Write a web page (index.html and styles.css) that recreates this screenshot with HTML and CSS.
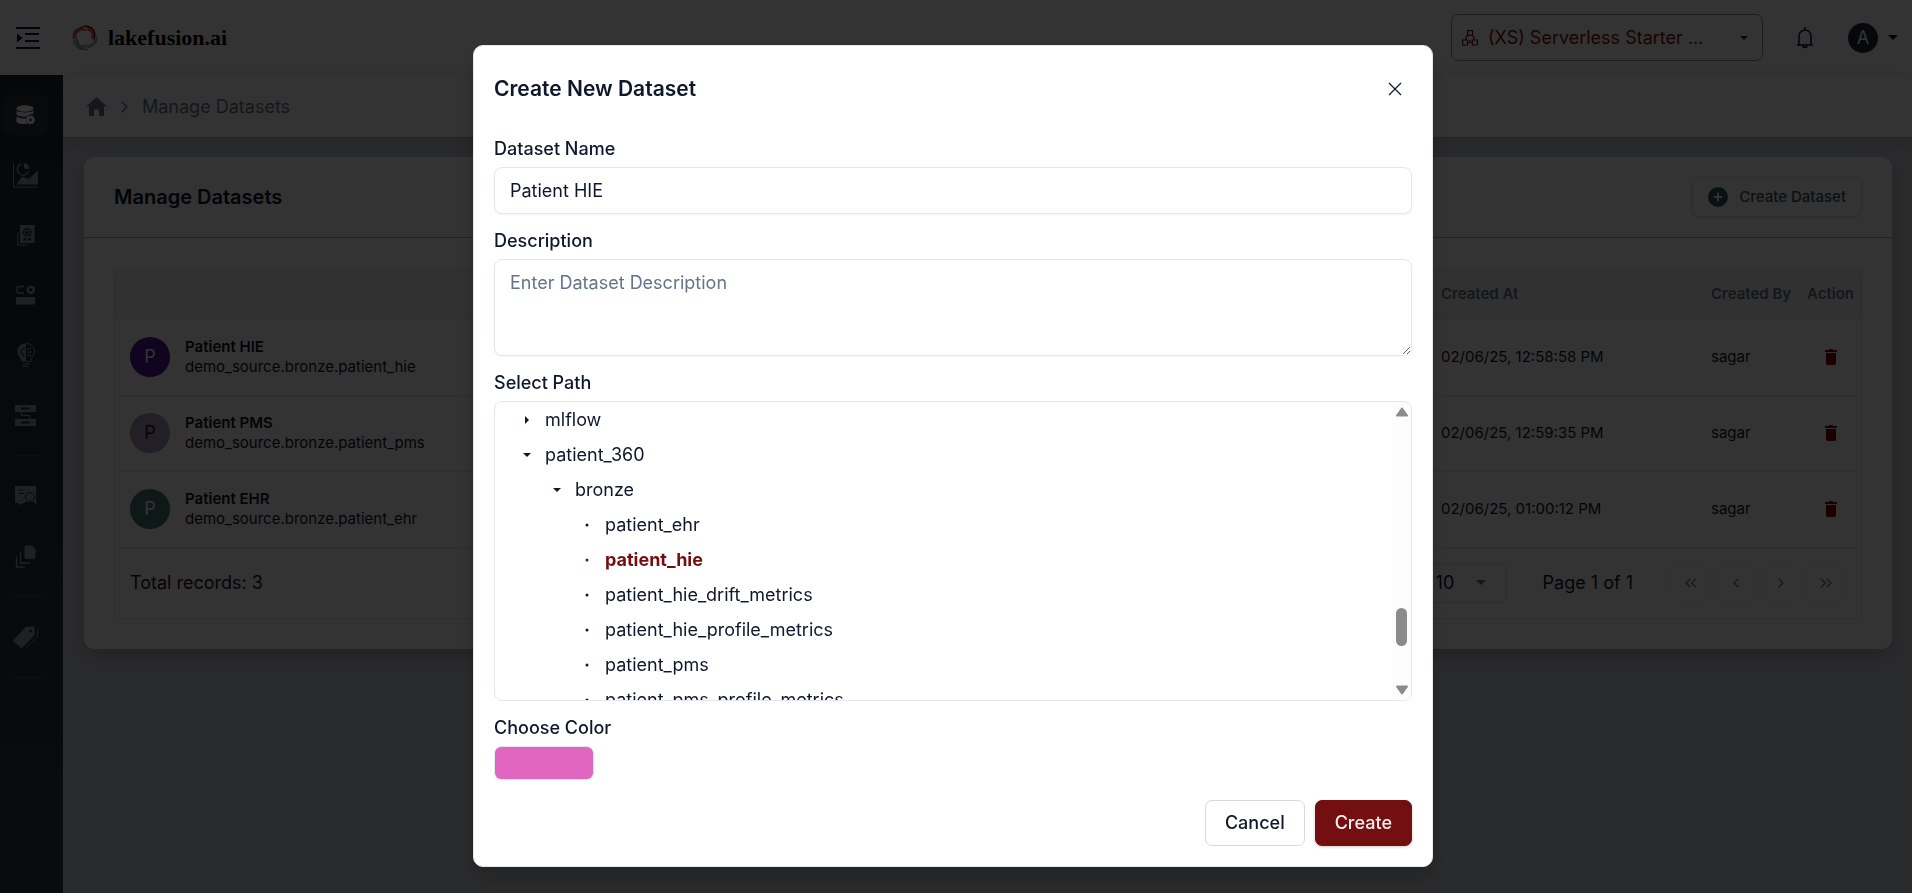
FILE: index.html
```html
<!DOCTYPE html>
<html lang="en">
<head>
<meta charset="utf-8">
<title>lakefusion.ai - Manage Datasets</title>
<link rel="stylesheet" href="styles.css">
</head>
<body>
<div class="app">
  <header class="topbar">
    <button class="icon-button menu-button" type="button" aria-label="Toggle menu">
      <svg width="24" height="22" viewBox="0 0 24 22" fill="currentColor"><path d="M0 0h24v2H0zM9 6h14v2H9zM9 13h14v2H9zM0 20h24v2H0zM1 6.500v9L6.500 11z"/></svg>
    </button>
    <a class="brand" href="#">
      <svg width="26" height="26" viewBox="0 0 26 26" fill="none" stroke-linecap="round">
        <path d="M1.500 13C1 8 4 3.500 10 3" stroke="#c44a4a" stroke-width="2"/>
        <path d="M3 12C4 6 9 3.500 14 5" stroke="#d06060" stroke-width="2"/>
        <path d="M9 2.500C15 0 21 3 22.500 8" stroke="#a02828" stroke-width="1.500"/>
        <path d="M14 1.200C20 2 24 6 22 14" stroke="#8a1d1d" stroke-width="2"/>
        <path d="M16 4.500C20 6.500 21.500 10 20 13" stroke="#b53a3a" stroke-width="1.500"/>
        <path d="M25 12C25 17 22 21 16 22.500" stroke="#8a94a6" stroke-width="1.500"/>
        <path d="M23 15C21 20 16 22 11 20.500" stroke="#949eae" stroke-width="1.500"/>
        <path d="M4 13C3.500 19 8 25 15 24.500" stroke="#7c879b" stroke-width="1.500"/>
        <path d="M1.500 15C2 20 6 24 10 24.500" stroke="#949eae" stroke-width="1.500"/>
        <path d="M5.500 15C6 19 9 22 13 22.500" stroke="#8a94a6" stroke-width="1.500"/>
      </svg>
      <span class="brand-name">lakefusion.ai</span>
    </a>
    <div class="topbar-tools">
      <label class="cluster">
        <svg width="16" height="16" viewBox="0 0 16 16" fill="none" stroke="currentColor" stroke-width="1.200"><path d="M5.600.6h5v4.800h-5zM.6 10h5v5h-5zM10.400 10h5v5h-5zM5.600 5.400 4 7.500V10M10.600 5.400 12 7.500V10M5.600 12.500h4.800M8 10v2.500"/></svg>
        <select class="cluster-select" aria-label="Compute cluster"><option>(XS) Serverless Starter ...</option></select>
        <svg width="8" height="4" viewBox="0 0 8 4" fill="currentColor"><path d="M0 0h8L4 4z"/></svg>
      </label>
      <button class="icon-button" type="button" aria-label="Notifications">
        <svg width="18" height="22" viewBox="0 0 18 22" fill="none" stroke="currentColor" stroke-width="1.600"><path d="M9 0v2.500M1 18h16M3 18V9a6 6 0 0 1 12 0v9M6.800 18.300a2.200 2.200 0 0 0 4.400 0"/></svg>
      </button>
      <button class="account" type="button" aria-label="Account menu">
        <span class="account-initial">A</span>
        <svg width="10" height="5" viewBox="0 0 10 5" fill="currentColor"><path d="M0 0h10L5 5z"/></svg>
      </button>
    </div>
  </header>

  <div class="body">
    <nav class="sidebar" aria-label="Main">
      <a class="nav-item nav-item-active" href="#" aria-label="Datasets">
        <svg width="20" height="20" viewBox="0 0 20 20" fill="currentColor"><ellipse cx="9" cy="3.500" rx="8.500" ry="3.300"/><path d="M.5 5.500c2 2.500 15 2.500 17 0v3.800a6 6 0 0 0-6.500 2.200C6 12 1.500 11 .5 9.500zM.5 11.500c2 1.800 6 2.200 9.500 2-.3 2 .2 3.800 1.500 5.200C7 19.600 1 19 .5 16.500z"/><path fill-rule="evenodd" d="M14.500 10.500a4.400 4.400 0 1 0 0 8.800 4.400 4.400 0 0 0 0-8.800zm0 3a1.400 1.400 0 1 1 0 2.800 1.400 1.400 0 0 1 0-2.800z"/></svg>
      </a>
      <a class="nav-item" href="#" aria-label="Analytics">
        <svg width="26" height="26" viewBox="0 0 26 26" fill="currentColor"><path d="M.5 1v24H25" fill="none" stroke="currentColor"/><path d="M4 22.500v-1l5-7 7 2.500 9-9v14.500zM11 .8a6 6 0 0 1 5.500 6H11z"/><path d="M8.500 1.800a5.700 5.700 0 1 0 7 7" fill="none" stroke="currentColor" stroke-width="1.300"/></svg>
      </a>
      <a class="nav-item" href="#" aria-label="Quality">
        <svg width="18" height="21" viewBox="0 0 18 21" fill="currentColor"><path fill-rule="evenodd" d="M3 0h14.500v18H3zM10.200 3a4.300 4.300 0 1 0 .01 0zM6.500 13v3l2-.8 1 .8v-3zm4.500 0v3l1-.8 2 .8v-3z"/><circle cx="10.200" cy="7.300" r="3.100"/><path class="nav-ink" d="m10.200 4.800.8 1.700 1.900.2-1.400 1.300.4 1.900-1.700-1-1.700 1 .4-1.900L7.500 6.700l1.900-.2z"/><path d="M.8 7v13H10" fill="none" stroke="currentColor"/></svg>
      </a>
      <a class="nav-item" href="#" aria-label="Entities">
        <svg width="20" height="20" viewBox="0 0 20 20" fill="currentColor"><rect y="12" width="19" height="7.500" rx="1"/><path d="M8 1.500H2.500Q1 1.500 1 3v3.500Q1 8 2.500 8H8" fill="none" stroke="currentColor" stroke-width="1.500"/><circle cx="14.800" cy="4.800" r="3" fill="none" stroke="currentColor" stroke-width="2.400"/></svg>
      </a>
      <a class="nav-item" href="#" aria-label="Insights">
        <svg width="18" height="25" viewBox="0 0 18 25" fill="currentColor"><path d="M9 .5C4 .5.5 4 .5 8.500c0 5 3.500 5 4 10H9z"/><path d="M9 .5c5 0 8.500 3.500 8.500 8 0 5-3.500 5-4 10H9M5 21h8.500M6 23.500h6M10 6h3l1-1.500M10 9h5M10 12h3l1 2" fill="none" stroke="currentColor"/><path class="nav-line" d="M8 5H5.500v2.500H4v3h2v2.500h2" fill="none"/></svg>
      </a>
      <a class="nav-item" href="#" aria-label="Pipelines">
        <svg width="21" height="21" viewBox="0 0 21 21" fill="currentColor"><path fill-rule="evenodd" d="M0 0h21v7H0zM6 2.500v2h9v-2zM0 14h21v7H0zm6 2.500v2h9v-2z"/><path d="M6.500 7v3.500h8V14" fill="none" stroke="currentColor"/></svg>
      </a>
      <hr class="nav-rule">
      <a class="nav-item" href="#" aria-label="Review">
        <svg width="22" height="20" viewBox="0 0 22 20" fill="currentColor"><path d="M0 0h21v16H10l-5 3-1.500-2H0z"/><path class="nav-line" d="M4 4h4M3.500 7.500H9M20.500 17l-3-3" fill="none"/><circle class="nav-line" cx="15" cy="11" r="4.500" fill="none"/><path d="m18 14 3.500 3.500" stroke="currentColor" stroke-width="1.500"/></svg>
      </a>
      <a class="nav-item" href="#" aria-label="Documents">
        <svg width="21" height="23" viewBox="0 0 21 23" fill="currentColor"><path d="M10.500.5H17l3.500 4V12q0 2-2 2h-7q-2 0-2-2V2.500q0-2 1-2z"/><path d="M5.500 7v11H15M1.500 11v11H10" fill="none" stroke="currentColor" stroke-width="1.300"/></svg>
      </a>
      <hr class="nav-rule">
      <a class="nav-item" href="#" aria-label="Tags">
        <svg width="25" height="23" viewBox="0 0 25 23" fill="currentColor"><path fill-rule="evenodd" d="M13 .8h7.500q1 0 1 1V9L9.500 21.500q-1 1-2 0l-6.800-6q-1-1 0-2zM17.500 3.500a1.500 1.500 0 1 0 .01 0z"/><path d="M24.500 3v7.500L12.500 22.500" fill="none" stroke="currentColor" stroke-width=".8"/></svg>
      </a>
      <hr class="nav-rule">
    </nav>

    <div class="main">
      <nav class="breadcrumb" aria-label="Breadcrumb">
        <a class="crumb-home" href="#" aria-label="Home"><svg width="21" height="19" viewBox="0 0 21 19" fill="currentColor"><path d="M10.500 0 21 9.500h-3V19h-5v-6.500H8V19H3V9.500H0z"/></svg></a>
        <svg width="7" height="12" viewBox="0 0 7 12" fill="none" stroke="currentColor" stroke-width="1.500"><path d="m.8.8 5 5.200-5 5.200"/></svg>
        <span>Manage Datasets</span>
      </nav>

      <main class="content">
        <section class="card">
          <div class="card-head">
            <h1 class="card-title">Manage Datasets</h1>
            <button class="create-button" type="button">
              <svg width="20" height="20" viewBox="0 0 20 20"><circle cx="10" cy="10" r="10" fill="currentColor"/><path d="M10 5.800v8.400M5.800 10h8.400" stroke="#fff" stroke-width="2"/></svg>
              Create Dataset
            </button>
          </div>
          <div class="card-body">
            <div class="grid">
              <table class="table">
                <thead>
                  <tr><th class="col-name"></th><th class="col-date">Created At</th><th class="col-by">Created By</th><th class="col-action">Action</th></tr>
                </thead>
                <tbody>
                  <tr>
                    <td><div class="dataset"><span class="badge badge-hie">P</span><div><div class="dataset-name">Patient HIE</div><div>demo_source.bronze.patient_hie</div></div></div></td>
                    <td>02/06/25, 12:58:58 PM</td><td>sagar</td>
                    <td><button class="icon-button trash" type="button" aria-label="Delete Patient HIE"><svg width="12" height="16" viewBox="0 0 12 16" fill="currentColor"><path d="M0 1h3.500l1-1h3l1 1H12v2H0zM1 4h10v10q0 2-1.500 2h-7Q1 16 1 14z"/></svg></button></td>
                  </tr>
                  <tr>
                    <td><div class="dataset"><span class="badge badge-pms">P</span><div><div class="dataset-name">Patient PMS</div><div>demo_source.bronze.patient_pms</div></div></div></td>
                    <td>02/06/25, 12:59:35 PM</td><td>sagar</td>
                    <td><button class="icon-button trash" type="button" aria-label="Delete Patient PMS"><svg width="12" height="16" viewBox="0 0 12 16" fill="currentColor"><path d="M0 1h3.500l1-1h3l1 1H12v2H0zM1 4h10v10q0 2-1.500 2h-7Q1 16 1 14z"/></svg></button></td>
                  </tr>
                  <tr>
                    <td><div class="dataset"><span class="badge badge-ehr">P</span><div><div class="dataset-name">Patient EHR</div><div>demo_source.bronze.patient_ehr</div></div></div></td>
                    <td>02/06/25, 01:00:12 PM</td><td>sagar</td>
                    <td><button class="icon-button trash" type="button" aria-label="Delete Patient EHR"><svg width="12" height="16" viewBox="0 0 12 16" fill="currentColor"><path d="M0 1h3.500l1-1h3l1 1H12v2H0zM1 4h10v10q0 2-1.500 2h-7Q1 16 1 14z"/></svg></button></td>
                  </tr>
                </tbody>
              </table>
              <div class="pager">
                <span class="pager-total">Total records: 3</span>
                <label class="page-size">
                  <select class="page-size-select" aria-label="Rows per page"><option>10</option></select>
                  <svg width="10" height="5" viewBox="0 0 10 5" fill="currentColor"><path d="M0 0h10L5 5z"/></svg>
                </label>
                <span class="page-label">Page 1 of 1</span>
                <div class="page-buttons">
                  <button class="page-button" type="button" aria-label="First page" disabled><svg width="12" height="10" viewBox="0 0 12 10"><path d="M5.300.7 1 5l4.300 4.300M11 .7 6.700 5 11 9.300"/></svg></button>
                  <button class="page-button" type="button" aria-label="Previous page" disabled><svg width="6" height="10" viewBox="0 0 6 10"><path d="M5.300.7 1 5l4.300 4.300"/></svg></button>
                  <button class="page-button" type="button" aria-label="Next page" disabled><svg width="6" height="10" viewBox="0 0 6 10"><path d="M.7.7 5 5 .7 9.300"/></svg></button>
                  <button class="page-button" type="button" aria-label="Last page" disabled><svg width="12" height="10" viewBox="0 0 12 10"><path d="M1 .7 5.300 5 1 9.300M6.700.7 11 5l-4.300 4.300"/></svg></button>
                </div>
              </div>
            </div>
          </div>
        </section>
      </main>
    </div>
  </div>
</div>

<div class="overlay">
  <form class="modal" role="dialog" aria-modal="true" aria-labelledby="modal-title">
    <div class="modal-head">
      <h2 class="modal-title" id="modal-title">Create New Dataset</h2>
      <button class="icon-button modal-close" type="button" aria-label="Close"><svg width="14" height="14" viewBox="0 0 14 14" fill="none" stroke="currentColor" stroke-width="1.200"><path d="m1 1 12 12M13 1 1 13"/></svg></button>
    </div>
    <div class="field">
      <label class="field-label" for="name">Dataset Name</label>
      <input class="control" id="name" type="text" value="Patient HIE">
    </div>
    <div class="field">
      <label class="field-label" for="description">Description</label>
      <textarea class="control control-area" id="description" placeholder="Enter Dataset Description"></textarea>
    </div>
    <div class="field">
      <span class="field-label" id="path-label">Select Path</span>
      <div class="tree-box">
        <ul class="tree" role="tree" aria-labelledby="path-label">
          <li class="node level-1" role="treeitem"><svg class="twisty" viewBox="0 0 10 10"><path d="M3 1v8l4-4z"/></svg>mlflow</li>
          <li class="node level-1" role="treeitem"><svg class="twisty" viewBox="0 0 10 10"><path d="M1 3h8L5 7z"/></svg>patient_360</li>
          <li class="node level-2" role="treeitem"><svg class="twisty" viewBox="0 0 10 10"><path d="M1 3h8L5 7z"/></svg>bronze</li>
          <li class="node level-3" role="treeitem"><svg class="twisty" viewBox="0 0 10 10"><circle cx="5" cy="5" r="1.500"/></svg>patient_ehr</li>
          <li class="node level-3 node-selected" role="treeitem" aria-selected="true"><svg class="twisty" viewBox="0 0 10 10"><circle cx="5" cy="5" r="1.500"/></svg>patient_hie</li>
          <li class="node level-3" role="treeitem"><svg class="twisty" viewBox="0 0 10 10"><circle cx="5" cy="5" r="1.500"/></svg>patient_hie_drift_metrics</li>
          <li class="node level-3" role="treeitem"><svg class="twisty" viewBox="0 0 10 10"><circle cx="5" cy="5" r="1.500"/></svg>patient_hie_profile_metrics</li>
          <li class="node level-3" role="treeitem"><svg class="twisty" viewBox="0 0 10 10"><circle cx="5" cy="5" r="1.500"/></svg>patient_pms</li>
          <li class="node level-3" role="treeitem"><svg class="twisty" viewBox="0 0 10 10"><circle cx="5" cy="5" r="1.500"/></svg>patient_pms_profile_metrics</li>
        </ul>
        <div class="scrollbar" aria-hidden="true">
          <svg width="14" height="10" viewBox="0 0 14 10"><path d="M7 1.500 12 8.500H2z"/></svg>
          <div class="track"><div class="thumb"></div></div>
          <svg width="14" height="10" viewBox="0 0 14 10"><path d="M7 8.500 2 1.500h10z"/></svg>
        </div>
      </div>
    </div>
    <div class="field">
      <label class="field-label" for="color">Choose Color</label>
      <input class="swatch" id="color" type="color" value="#e066bf">
    </div>
    <div class="modal-actions">
      <button class="button" type="button">Cancel</button>
      <button class="button button-primary" type="submit">Create</button>
    </div>
  </form>
</div>
</body>
</html>
```
FILE: styles.css
```css
* { box-sizing: border-box; }

body {
  margin: 0;
  font-family: Inter, "Liberation Sans", sans-serif;
  font-size: 18px;
  line-height: 24px;
  color: #0f172a;
  background: #cbd5e1;
}

svg { display: block; flex: none; }
a { color: inherit; text-decoration: none; }

button, select, input, textarea { font: inherit; color: inherit; }

select {
  appearance: none;
  border: 0;
  padding: 0;
  background: transparent;
  flex: 1;
  min-width: 0;
}

.icon-button {
  display: flex;
  padding: 0;
  border: 0;
  background: none;
}

.app { display: flex; flex-direction: column; height: 100vh; overflow: hidden; background: #d2d5d9; }

/* Top bar */
.topbar {
  display: flex;
  align-items: center;
  height: 75px;
  flex: none;
  padding: 0 14px 0 16px;
  background: #fff;
}

.brand { display: flex; align-items: center; gap: 10px; margin-left: 32px; }
.brand-name { font: bold 22px/28px "Liberation Serif", "Times New Roman", serif; color: #000; }

.topbar-tools { display: flex; align-items: center; margin-left: auto; }

.cluster {
  display: flex;
  align-items: center;
  gap: 10px;
  width: 312px;
  height: 47px;
  margin-right: 33px;
  padding: 0 14px 0 10px;
  border: 1px solid #8a919c;
  border-radius: 7px;
  color: #7b0f13;
}

.account {
  display: flex;
  align-items: center;
  gap: 10px;
  margin-left: 34px;
  padding: 0;
  border: 0;
  background: none;
}

.account-initial {
  width: 30px;
  border-radius: 50%;
  background: #1e293b;
  color: #fff;
  line-height: 30px;
}

.body { display: flex; flex: 1; min-height: 0; }

/* Sidebar */
.sidebar {
  display: flex;
  flex-direction: column;
  width: 63px;
  flex: none;
  padding: 20px 15px 0 3px;
  background: linear-gradient(#1e252e, #343a42);
  color: #94a0b0;
}

.nav-item {
  display: flex;
  align-items: center;
  justify-content: center;
  height: 40px;
  margin-bottom: 20px;
  border-radius: 8px;
}

.nav-item-active { background: #2c333b; color: #fff; }
.nav-ink { fill: #222932; }
.nav-line { stroke: #222932; }

.nav-rule {
  width: 30px;
  height: 1px;
  margin: 0 0 20px 10px;
  border: 0;
  background: #4b535e;
}

/* Page */
.main { display: flex; flex-direction: column; flex: 1; min-width: 0; }

.breadcrumb {
  display: flex;
  align-items: center;
  gap: 14px;
  height: 62px;
  flex: none;
  padding: 0 23px;
  border-top: 1px solid #e2e8f0;
  background: #fff;
  color: #64748b;
  box-shadow: 0 6px 16px rgba(0, 0, 0, 0.15);
}

.content { padding: 20px 20px 20px 21px; }

.card {
  border-radius: 10px;
  background: #fff;
  box-shadow: 0 8px 20px rgba(0, 0, 0, 0.2);
}

.card-head {
  display: flex;
  align-items: center;
  justify-content: space-between;
  height: 81px;
  padding: 0 30px;
  border-bottom: 1px solid #a8afb8;
}

.card-title { margin: 0; font-size: 20px; font-weight: 600; }

.create-button {
  display: flex;
  align-items: center;
  gap: 11px;
  height: 40px;
  padding: 0 15px;
  border: 1px solid #dde1e6;
  border-radius: 7px;
  background: #fff;
  color: #2f5560;
  font-size: 15px;
  font-weight: 500;
  box-shadow: 0 1px 3px rgba(0, 0, 0, 0.12);
}

.card-body { padding: 30px; }

.grid { border: 1px solid #e2e5ea; border-radius: 7px; overflow: hidden; }

.table {
  width: 100%;
  table-layout: fixed;
  border-collapse: collapse;
  font-size: 15px;
  line-height: 20px;
}

.table tr { height: 76px; border-bottom: 1px solid #e2e5ea; }
.table thead tr { height: 50px; background: #f3f4f5; }
.table th { padding: 0 15px; text-align: left; font-weight: 600; color: #64748b; }
.table td { padding: 0 15px; }

.col-date { width: 270px; }
.col-by { width: 96px; }
.col-action { width: 69px; }
.table .col-by, .table .col-action { padding-right: 0; }

.dataset { display: flex; align-items: center; gap: 15px; }
.dataset-name { font-weight: 600; }

.badge {
  width: 40px;
  border-radius: 50%;
  text-align: center;
  font-size: 18px;
  line-height: 40px;
}

.badge-hie { background: #551896; color: #fff; }
.badge-pms { background: #b099bd; }
.badge-ehr { background: #467876; color: #fff; }

.trash { margin-left: 18px; color: #800008; }

.pager { display: flex; align-items: center; height: 70px; padding: 0 15px; }
.pager-total { margin-right: auto; }

.page-size {
  display: flex;
  align-items: center;
  width: 88px;
  height: 40px;
  padding: 0 20px 0 16px;
  border: 1px solid #dde1e6;
  border-radius: 7px;
  color: #0f172a;
}

.page-size svg { color: #64707f; }
.page-label { margin: 0 38px 0 36px; }
.page-buttons { display: flex; gap: 5px; }

.page-button {
  display: flex;
  align-items: center;
  justify-content: center;
  width: 40px;
  height: 40px;
  padding: 0;
  border: 1px solid #f0f2f4;
  border-radius: 7px;
  background: none;
}

.page-button svg { fill: none; stroke: #77818e; stroke-width: 1.5px; }

/* Dialog */
.overlay {
  position: fixed;
  inset: 0;
  display: flex;
  justify-content: center;
  align-items: flex-start;
  padding: 45px 6px 0 0;
  background: rgba(0, 0, 0, 0.8);
}

.modal {
  display: flex;
  flex-direction: column;
  gap: 15px;
  width: 100%;
  max-width: 960px;
  padding: 20px;
  border: 1px solid #e2e8f0;
  border-radius: 10px;
  background: #fff;
  box-shadow: 0 10px 20px rgba(0, 0, 0, 0.2);
}

.modal-head {
  display: flex;
  align-items: center;
  justify-content: space-between;
  height: 46px;
  margin-bottom: 10px;
  padding-right: 10px;
}

.modal-title { margin: 0; font-size: 21px; font-weight: 600; }

.field { display: flex; flex-direction: column; gap: 6px; }
.field-label { font-weight: 500; }

.control {
  width: 100%;
  height: 47px;
  padding: 0 15px;
  border: 1px solid #e2e8f0;
  border-radius: 8px;
  background: #fff;
  box-shadow: 0 1px 2px rgba(0, 0, 0, 0.05);
}

.control::placeholder { color: #64748b; }
.control-area { height: 97px; padding: 11px 15px; resize: vertical; }

.tree-box {
  display: flex;
  height: 300px;
  border: 1px solid #e2e8f0;
  border-radius: 8px;
  overflow: hidden;
}

.tree { flex: 1; margin: 0; padding: 0; list-style: none; overflow: hidden; }

.node { display: flex; align-items: center; gap: 13px; height: 35px; }
.level-1 { padding-left: 27px; }
.level-2 { padding-left: 57px; }
.level-3 { padding-left: 87px; }
.node-selected { color: #730e11; font-weight: 700; }
.twisty { width: 10px; height: 10px; fill: currentColor; }

.scrollbar {
  display: flex;
  flex-direction: column;
  align-items: center;
  width: 19px;
  padding: 5px 0;
  background: #fcfcfc;
}

.scrollbar svg { fill: #8b8b8b; stroke: #8b8b8b; stroke-width: 2px; stroke-linejoin: round; }
.track { display: flex; flex: 1; flex-direction: column; justify-content: flex-end; padding-bottom: 39px; }
.thumb { width: 11px; height: 38px; border-radius: 6px; background: #8b8b8b; }

.swatch {
  width: 100px;
  height: 34px;
  padding: 0;
  border: 1px solid #e2e8f0;
  border-radius: 7px;
  background: none;
  overflow: hidden;
}

.swatch::-webkit-color-swatch-wrapper { padding: 0; }
.swatch::-webkit-color-swatch { border: 0; }

.modal-actions { display: flex; justify-content: flex-end; gap: 10px; margin-top: 5px; }

.button {
  height: 46px;
  padding: 0 19px;
  border: 1px solid #d5d9e2;
  border-radius: 7px;
  background: #fff;
  font-weight: 500;
}

.button-primary {
  border-color: #730e11;
  background: #730e11;
  color: #fbeeee;
  box-shadow: 0 1px 3px rgba(0, 0, 0, 0.2);
}
```
